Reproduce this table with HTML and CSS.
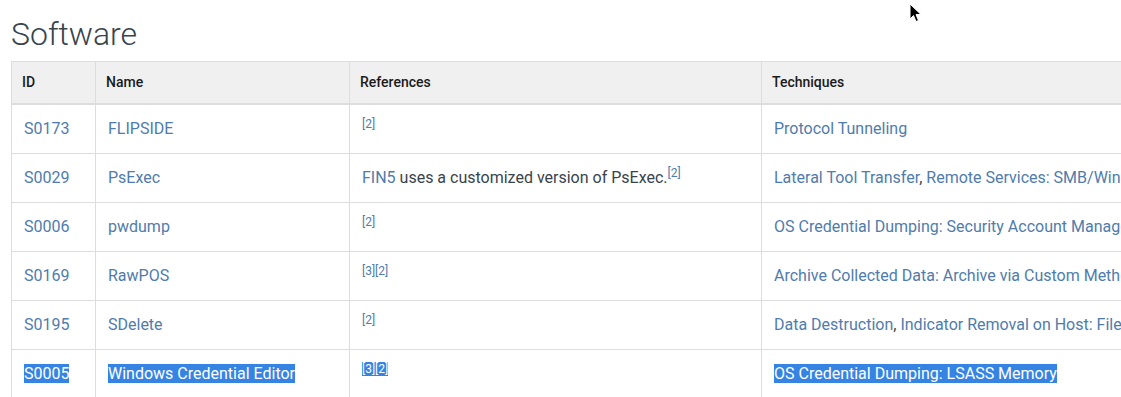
FILE: index.html
```html
<!DOCTYPE html>
<html>
<head>
<meta charset="utf-8">
<link rel="stylesheet" href="styles.css">
</head>
<body>
<div class="page">
  <h2 class="title">Software</h2>
  <div class="table-wrap">
    <table class="sw-table">
      <colgroup>
        <col class="c-id"><col class="c-name"><col class="c-refs"><col class="c-tech">
      </colgroup>
      <thead>
        <tr><th>ID</th><th>Name</th><th>References</th><th>Techniques</th></tr>
      </thead>
      <tbody>
        <tr>
          <td><a href="#">S0173</a></td>
          <td><a href="#">FLIPSIDE</a></td>
          <td><sup><a href="#">[2]</a></sup></td>
          <td><a href="#">Protocol Tunneling</a></td>
        </tr>
        <tr>
          <td><a href="#">S0029</a></td>
          <td><a href="#">PsExec</a></td>
          <td><a href="#">FIN5</a> uses a customized version of PsExec.<sup><a href="#">[2]</a></sup></td>
          <td><a href="#">Lateral Tool Transfer</a>, <a href="#">Remote Services: SMB/Windows Admin Shares</a></td>
        </tr>
        <tr>
          <td><a href="#">S0006</a></td>
          <td><a href="#">pwdump</a></td>
          <td><sup><a href="#">[2]</a></sup></td>
          <td><a href="#">OS Credential Dumping: Security Account Manager</a></td>
        </tr>
        <tr>
          <td><a href="#">S0169</a></td>
          <td><a href="#">RawPOS</a></td>
          <td><sup><a href="#">[3]</a><a href="#">[2]</a></sup></td>
          <td><a href="#">Archive Collected Data: Archive via Custom Method</a></td>
        </tr>
        <tr>
          <td><a href="#">S0195</a></td>
          <td><a href="#">SDelete</a></td>
          <td><sup><a href="#">[2]</a></sup></td>
          <td><a href="#">Data Destruction</a>, <a href="#">Indicator Removal on Host: File Deletion</a></td>
        </tr>
        <tr class="selected">
          <td><a href="#" class="sel">S0005</a></td>
          <td><a href="#" class="sel">Windows Credential Editor</a></td>
          <td><sup class="sel"><a href="#">[3]</a><a href="#">[2]</a></sup></td>
          <td><a href="#" class="sel">OS Credential Dumping: LSASS Memory</a></td>
        </tr>
      </tbody>
    </table>
  </div>
</div>
<svg class="cursor" width="13" height="20" viewBox="0 0 13 20">
  <path d="M1 1 L1 16 L4.5 12.5 L7 18.5 L9.5 17.5 L7 11.5 L12 11.5 Z" fill="#000" stroke="#fff" stroke-width="1" stroke-linejoin="round"/>
</svg>
</body>
</html>
```
FILE: styles.css
```css
html, body {
  margin: 0;
  padding: 0;
  background: #fff;
  overflow: hidden;
}
body {
  font-family: Roboto, "Liberation Sans", sans-serif;
  color: #39434c;
}
.page {
  padding: 15px 0 0 11px;
}
.title {
  margin: 0 0 8px 0;
  font-size: 32px;
  font-weight: 300;
  line-height: 38px;
  color: #39434c;
}
.table-wrap {
  width: 1110px;
  overflow: hidden;
}
.sw-table {
  border-collapse: collapse;
  table-layout: fixed;
  width: 1400px;
}
.c-id { width: 84px; }
.c-name { width: 254px; }
.c-refs { width: 412px; }
.c-tech { width: 650px; }
.sw-table th {
  background: #f0f0f0;
  border: 1px solid #dddddd;
  border-bottom: 2px solid #dddddd;
  padding: 10px 10px 11px 10px;
  font-size: 14px;
  line-height: 20px;
  font-weight: 500;
  color: #1a1a1a;
  text-align: left;
  white-space: nowrap;
}
.sw-table td {
  border: 1px solid #dddddd;
  padding: 12px 12px;
  font-size: 16px;
  line-height: 24px;
  vertical-align: top;
  white-space: nowrap;
  overflow: hidden;
}
.sw-table a {
  color: #4f7cac;
  text-decoration: none;
}
.sw-table sup {
  font-size: 12px;
  line-height: 0;
  vertical-align: 6px;
}
.sel {
  background: #3584e4;
  color: #fff;
}
.sw-table .sel, .sw-table .sel a {
  color: #fff;
}
.cursor {
  position: absolute;
  left: 909px;
  top: 3px;
}
```
